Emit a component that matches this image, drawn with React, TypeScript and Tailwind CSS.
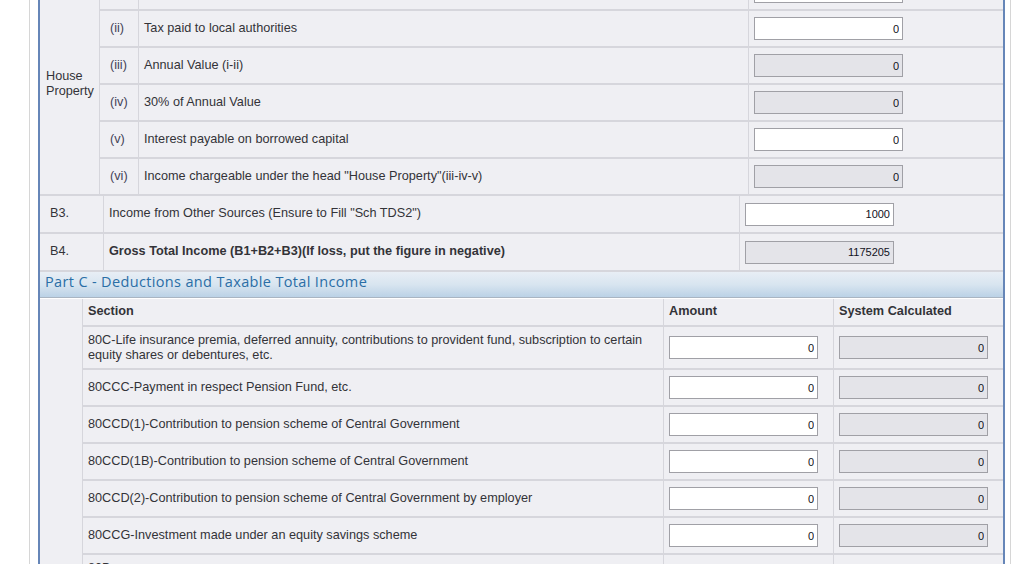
import React from "react";

function Box({ value, ro }: { value: string; ro?: boolean }) {
  return (
    <input
      readOnly
      value={value}
      className={
        "block w-[149px] h-[23px] border border-[#a0a0a6] text-right pr-[3px] text-[11px] text-[#111122] font-['Liberation_Sans',Arial,sans-serif] outline-none " +
        (ro ? "bg-[#e4e4e9]" : "bg-white")
      }
    />
  );
}

const cell = "bg-[#efeff3] flex items-center";

const houseRows = [
  { n: "", t: "", ro: false },
  { n: "(ii)", t: "Tax paid to local authorities", ro: false },
  { n: "(iii)", t: "Annual Value (i-ii)", ro: true },
  { n: "(iv)", t: "30% of Annual Value", ro: true },
  { n: "(v)", t: "Interest payable on borrowed capital", ro: false },
  { n: "(vi)", t: 'Income chargeable under the head "House Property"(iii-iv-v)', ro: true },
];

const deductions = [
  "80CCC-Payment in respect Pension Fund, etc.",
  "80CCD(1)-Contribution to pension scheme of Central Government",
  "80CCD(1B)-Contribution to pension scheme of Central Government",
  "80CCD(2)-Contribution to pension scheme of Central Government by employer",
  "80CCG-Investment made under an equity savings scheme",
];

export default function App() {
  return (
    <div className="w-[1035px] h-[564px] overflow-hidden bg-white font-['Liberation_Sans',Arial,sans-serif] text-[12.7px] text-[#333338]">
      <div className="ml-[29px] w-[982px] h-full border-x border-[#d6d6d6] pl-[8px] pr-[5px]">
        <div className="h-full border-x-2 border-[#6686b8] bg-[#efeff3] overflow-hidden">
          {/* House property */}
          <div className="mt-[-26px] grid grid-cols-[59px_38px_609px_1fr] grid-rows-[35px_35px_35px_35px_35px_35px] gap-x-[1px] gap-y-[2px] bg-[#d6d6dc] border-b-2 border-[#d6d6dc]">
            <div className={cell + " row-span-6 pl-[6px] leading-[15px]"}>
              House
              <br />
              Property
            </div>
            {houseRows.map((r, i) => (
              <React.Fragment key={i}>
                <div className={cell + " pl-[10px] text-[#444458]"}>{r.n}</div>
                <div className={cell + " pl-[5px]"}>{r.t}</div>
                <div className={cell + " pl-[5px]"}>
                  <Box value="0" ro={r.ro} />
                </div>
              </React.Fragment>
            ))}
          </div>

          {/* B3 / B4 */}
          <div className="grid grid-cols-[63px_635px_1fr] grid-rows-[36px_36px] gap-x-[1px] gap-y-[2px] bg-[#d6d6dc] border-b-2 border-[#d6d6dc]">
            <div className={cell + " pl-[10px]"}>B3.</div>
            <div className={cell + " pl-[5px]"}>Income from Other Sources (Ensure to Fill "Sch TDS2")</div>
            <div className={cell + " pl-[5px]"}>
              <Box value="1000" />
            </div>
            <div className={cell + " pl-[10px]"}>B4.</div>
            <div className={cell + " pl-[5px] font-bold"}>
              Gross Total Income (B1+B2+B3)(If loss, put the figure in negative)
            </div>
            <div className={cell + " pl-[5px]"}>
              <Box value="1175205" ro />
            </div>
          </div>

          {/* Part C header */}
          <div className="h-[27px] flex flex-col">
            <div className="h-[25px] bg-gradient-to-b from-[#e8eef5] via-[#d8e5f0] to-[#bbd2e6] flex items-center pl-[5px] pb-[5px] font-['Open_Sans',sans-serif] text-[14.5px] tracking-[0.35px] text-[#2a6ea6]">
              Part C - Deductions and Taxable Total Income
            </div>
            <div className="h-[1px] bg-[#a9b5c2]" />
            <div className="h-[1px] bg-white" />
          </div>

          {/* Part C table */}
          <div className="grid grid-cols-[42px_580px_169px_1fr] grid-rows-[26px_41px_35px_35px_35px_35px_35px_60px] gap-x-[1px] gap-y-[2px] bg-[#d6d6dc]">
            <div className="bg-[#efeff3] row-span-8" />
            <div className={cell + " pl-[5px] font-bold"}>Section</div>
            <div className={cell + " pl-[5px] font-bold"}>Amount</div>
            <div className={cell + " pl-[5px] font-bold"}>System Calculated</div>

            <div className={cell + " pl-[5px] leading-[15px]"}>
              <span>
                80C-Life insurance premia, deferred annuity, contributions to provident fund, subscription to certain
                <br />
                equity shares or debentures, etc.
              </span>
            </div>
            <div className={cell + " pl-[5px]"}>
              <Box value="0" />
            </div>
            <div className={cell + " pl-[5px]"}>
              <Box value="0" ro />
            </div>

            {deductions.map((d) => (
              <React.Fragment key={d}>
                <div className={cell + " pl-[5px]"}>{d}</div>
                <div className={cell + " pl-[5px]"}>
                  <Box value="0" />
                </div>
                <div className={cell + " pl-[5px]"}>
                  <Box value="0" ro />
                </div>
              </React.Fragment>
            ))}

            <div className="bg-[#efeff3] pl-[5px] pt-[6px] leading-[15px]">80D</div>
            <div className="bg-[#efeff3]" />
            <div className="bg-[#efeff3]" />
          </div>
        </div>
      </div>
    </div>
  );
}
